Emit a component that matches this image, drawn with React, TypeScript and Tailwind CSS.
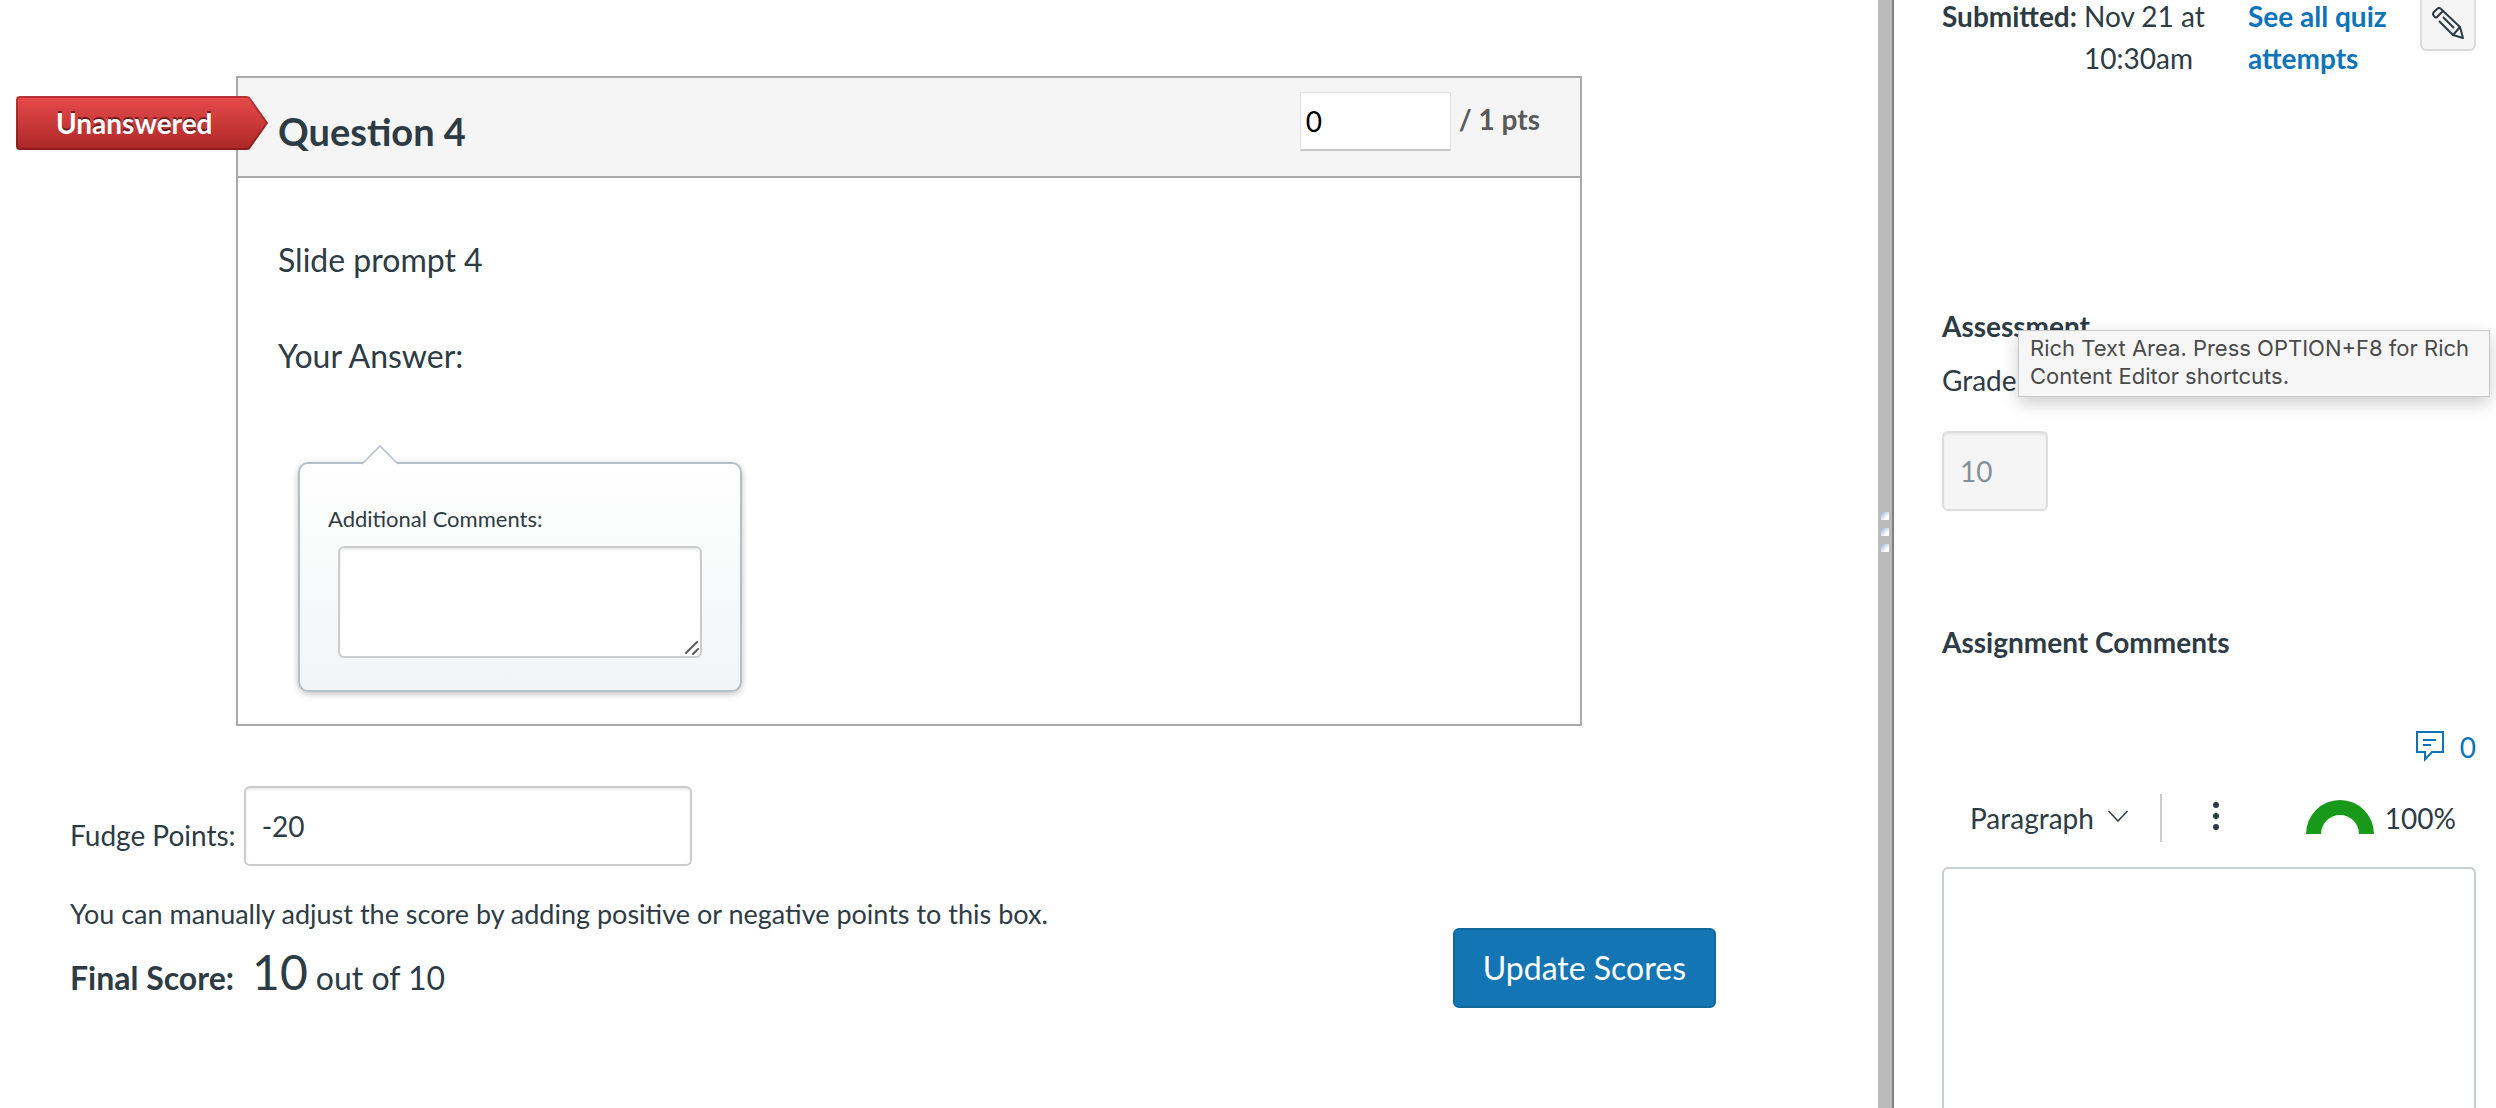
import { useState } from 'react';

function UnansweredFlag() {
  return (
    <div className="absolute -left-[222px] top-[18px] h-[54px] w-[252px]">
      <svg viewBox="0 0 252 54" className="absolute inset-0 h-full w-full" aria-hidden="true">
        <defs>
          <linearGradient id="flag-fill" x1="0" y1="0" x2="0" y2="1">
            <stop offset="0" stopColor="#e84b4b" />
            <stop offset="1" stopColor="#ac2727" />
          </linearGradient>
          <linearGradient id="flag-edge" x1="0" y1="0" x2="0" y2="1">
            <stop offset="0" stopColor="#b93535" />
            <stop offset="1" stopColor="#8a1c1c" />
          </linearGradient>
        </defs>
        <path
          d="M4 1H231Q233 1 234 3L251 27L234 51Q233 53 231 53H4Q1 53 1 50V4Q1 1 4 1Z"
          fill="url(#flag-fill)"
          stroke="url(#flag-edge)"
          strokeWidth="2"
        />
      </svg>
      <span className="relative block pl-10 text-[28px] leading-[54px] font-bold text-white [text-shadow:0_-2px_0_rgba(0,0,0,0.5)]">
        Unanswered
      </span>
    </div>
  );
}

function PencilIcon() {
  return (
    <svg viewBox="0 0 32 32" className="size-8" fill="none" stroke="#2d3b45" strokeWidth="2" strokeLinejoin="round" aria-hidden="true">
      <path d="M4 11L2 9Q0 7 2 5L5 2Q7 0 9 2L28 20L31 31L21 28L7 14" />
      <path d="M4 11L11 4M21 28L28 20M11 10L22 21" />
    </svg>
  );
}

function CommentIcon() {
  return (
    <svg viewBox="0 0 28 32" className="h-8 w-7" fill="none" stroke="#0e74b9" strokeWidth="2" aria-hidden="true">
      <path d="M1 1H27V21H16L9 28.500V21H1Z" />
      <path d="M7 9H20M7 14H15" />
    </svg>
  );
}

function Question() {
  const [points, setPoints] = useState('0');

  return (
    <section className="relative mr-[134px] ml-[166px] border-2 border-[#aaa]">
      <UnansweredFlag />
      <header className="flex min-h-[100px] items-start justify-between border-b-2 border-[#aaa] bg-[#f5f5f5] px-10">
        <h2 className="mt-[29px] text-[38px] leading-[48px] font-bold">Question 4</h2>
        <label className="mt-[14px] flex items-center gap-2 text-[28px] font-bold text-[#595959]">
          <input
            aria-label="Points for question 4"
            value={points}
            onChange={e => setPoints(e.target.value)}
            className="h-[59px] w-[151px] border border-b-2 border-[#e2e2e2] border-b-[#c4c4c4] bg-white px-[5px] text-[28px] font-normal text-black"
          />
          <span className="pb-[6px]">/ 1 pts</span>
        </label>
      </header>

      <div className="px-10 pt-[58px] pb-8">
        <p className="text-[32px] leading-[48px]">Slide prompt 4</p>
        <p className="mt-12 text-[32px] leading-[48px]">Your Answer:</p>

        <div className="relative mt-[82px] ml-5 w-[444px] rounded-[10px] border-2 border-[#b4bfc9] bg-linear-to-b from-white to-[#f2f4f5] px-7 pt-[37px] pb-8 shadow-[0_2px_6px_rgba(0,0,0,0.25)]">
          <svg viewBox="0 0 38 22" className="absolute -top-5 left-[61px] h-[22px] w-[38px]" aria-hidden="true">
            <path d="M1 20L19 2L37 20V22H1Z" fill="#fff" />
            <path d="M1 20L19 2L37 20" fill="none" stroke="#b4bfc9" strokeWidth="1.500" />
          </svg>
          <label htmlFor="additional-comments" className="block text-[22px] leading-9">
            Additional Comments:
          </label>
          <div className="relative mx-[10px] mt-[9px]">
            <textarea
              id="additional-comments"
              className="block h-28 w-full resize-none rounded-md border-2 border-[#ccc] bg-white p-2 text-[22px] shadow-[inset_0_2px_2px_rgba(0,0,0,0.075)]"
            />
            <svg
              viewBox="0 0 14 14"
              className="pointer-events-none absolute right-[3px] bottom-[3px] size-[14px]"
              stroke="#5c5c5c"
              strokeWidth="2"
              strokeLinecap="round"
              aria-hidden="true"
            >
              <path d="M1 12L12 1M8 13L13 8" />
            </svg>
          </div>
        </div>
      </div>
    </section>
  );
}

function ScoreForm() {
  const [fudge, setFudge] = useState('-20');

  return (
    <form onSubmit={e => e.preventDefault()}>
      <div className="mt-[60px] flex items-end gap-2">
        <label htmlFor="fudge-points" className="mb-[10px] text-[28px] leading-[42px]">
          Fudge Points:
        </label>
        <input
          id="fudge-points"
          value={fudge}
          onChange={e => setFudge(e.target.value)}
          className="h-20 w-[448px] rounded-md border-2 border-[#ccc] px-4 text-[28px] shadow-[inset_0_2px_2px_rgba(0,0,0,0.075)]"
        />
      </div>
      <div className="mt-[27px] flex items-end justify-between">
        <div>
          <p className="text-[27px] leading-[42px]">
            You can manually adjust the score by adding positive or negative points to this box.
          </p>
          <p className="mt-[7px] flex items-baseline text-[32px] leading-[60px]">
            <strong>Final Score:</strong>
            <span className="mr-2 ml-[18px] text-5xl leading-[60px]">10</span>
            <span>out of 10</span>
          </p>
        </div>
        <button type="submit" className="h-20 rounded-md border-2 border-[#1168a1] bg-[#1475b5] px-7 text-[32px] text-white">
          Update Scores
        </button>
      </div>
    </form>
  );
}

function Divider() {
  return (
    <div className="flex w-4 shrink-0 flex-col items-center gap-2 border-r-2 border-[#808080] bg-[#bbb] pt-[512px]">
      <i className="size-2 bg-linear-to-br from-[#96b0d2] to-white to-70%" />
      <i className="size-2 bg-linear-to-br from-[#96b0d2] to-white to-70%" />
      <i className="size-2 bg-linear-to-br from-[#96b0d2] to-white to-70%" />
    </div>
  );
}

function EditorToolbar() {
  return (
    <div className="mt-[26px] flex h-12 items-center pl-7">
      <button type="button" className="flex items-center gap-[14px]">
        Paragraph
        <svg viewBox="0 0 20 12" className="mb-1 h-3 w-5" fill="none" stroke="#2d3b45" strokeWidth="1.500" aria-hidden="true">
          <path d="M0.500 1L10 11L19.500 1" />
        </svg>
      </button>
      <div className="ml-8 h-12 w-[2px] bg-[#c7cdd1]" />
      <button type="button" aria-label="More" className="mb-1 ml-[50px]">
        <svg viewBox="0 0 8 30" className="h-[30px] w-2" fill="#2d3b45" aria-hidden="true">
          <circle cx="4" cy="4" r="3" />
          <circle cx="4" cy="15" r="3" />
          <circle cx="4" cy="26" r="3" />
        </svg>
      </button>
      <div className="ml-auto flex items-center gap-[11px] pr-5">
        <svg viewBox="0 0 68 34" className="mb-[2px] h-[34px] w-[68px]" aria-hidden="true">
          <path d="M0 34A34 34 0 0 1 68 34H53A19 19 0 0 0 15 34Z" fill="#18991a" />
        </svg>
        <span>100%</span>
      </div>
    </div>
  );
}

function Sidebar() {
  return (
    <aside className="w-[602px] shrink-0 pr-5 pl-12 text-[28px] leading-[42px]">
      <div className="-mt-[5px] flex items-start">
        <strong className="w-[142px] shrink-0">Submitted:</strong>
        <span className="w-[164px] shrink-0 pr-5">Nov 21 at 10:30am</span>
        <a href="#attempts" className="w-[160px] font-bold text-[#0e74b9]">
          See all quiz attempts
        </a>
        <button
          type="button"
          aria-label="Edit submission"
          className="ml-auto flex h-14 w-14 items-center justify-center rounded-md border-2 border-[#dcdcdc] bg-[#f5f5f5]"
        >
          <PencilIcon />
        </button>
      </div>

      <section className="relative mt-[226px]">
        <h3 className="font-bold">Assessment</h3>
        <label htmlFor="grade" className="mt-3 block">
          Grade
        </label>
        <input
          id="grade"
          value="10"
          disabled
          className="mt-[30px] block h-20 w-[106px] rounded-md border-2 border-[#dedede] bg-[#f5f5f5] px-4 text-[#868f96] shadow-[inset_0_2px_2px_rgba(0,0,0,0.06)]"
        />
        <div
          role="tooltip"
          className="absolute top-[25px] -right-[14px] left-[76px] border border-[#c8c8c8] bg-[#f6f6f6] px-[11px] pt-[3px] pb-[6px] font-[Inter,sans-serif] text-[22px] leading-7 text-[#4a4a4a] shadow-[0_6px_16px_rgba(0,0,0,0.2)]"
        >
          Rich Text Area. Press OPTION+F8 for Rich Content Editor shortcuts.
        </div>
      </section>

      <section className="mt-[110px]">
        <h3 className="font-bold">Assignment Comments</h3>
        <div className="mt-[63px] flex items-center justify-end gap-4 text-[#0e74b9]">
          <CommentIcon />
          <span>0</span>
        </div>
        <EditorToolbar />
        <textarea
          aria-label="Add a comment"
          className="mt-[25px] block h-[320px] w-full resize-none rounded-md border-2 border-[#c7cdd1] p-4"
        />
      </section>
    </aside>
  );
}

export default function App() {
  return (
    <div className="flex h-screen overflow-hidden bg-white font-[Lato,sans-serif] text-[#2d3b45]">
      <main className="min-w-0 flex-1 pt-[76px] pr-[162px] pl-[70px]">
        <Question />
        <ScoreForm />
      </main>
      <Divider />
      <Sidebar />
    </div>
  );
}
